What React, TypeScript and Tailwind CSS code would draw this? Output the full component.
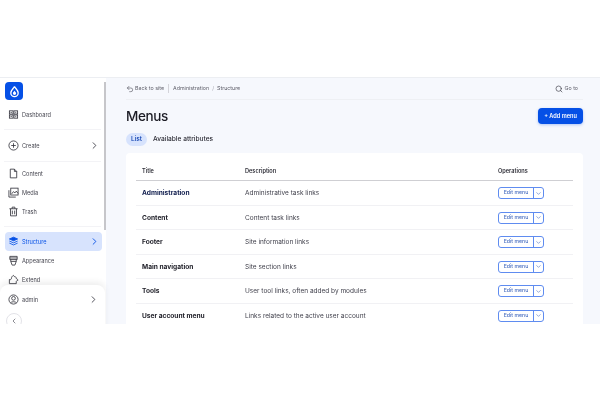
import React from 'react'
import { ChevronRight, ChevronDown, ChevronLeft, Search, Undo2 } from 'lucide-react'

const font = { fontFamily: 'Inter, sans-serif' }

const DropLogo = () => (
  <svg viewBox="0 0 24 24" className="w-[13px] h-[13px]" fill="none" stroke="white">
    <path d="M12 2.5c.8 3.2 6.8 6.6 6.8 12.2a6.8 6.8 0 0 1-13.6 0C5.200 9.100 11.200 5.700 12 2.500z" strokeWidth="2.4" />
    <path d="M12 10.500c.5 1.500 3 2.700 3 4.900a3 3 0 0 1-6 0c0-2.200 2.500-3.400 3-4.900z" fill="white" stroke="none" />
  </svg>
)

const icons: Record<string, React.ReactNode> = {
  dashboard: (
    <>
      <rect x="3" y="4" width="8" height="7" />
      <rect x="13" y="4" width="8" height="7" />
      <rect x="3" y="13" width="8" height="7" />
      <rect x="13" y="13" width="8" height="7" />
      <path d="M5.500 7.500h3M17 6v3M5.500 16.500h3M17 15v3" />
    </>
  ),
  create: (
    <>
      <circle cx="12" cy="12" r="10" />
      <path d="M7 12h10M12 7v10" />
    </>
  ),
  content: <path d="M5 2.500h9l5 5v14H5zM14 2.500v5h5" />,
  media: (
    <>
      <rect x="6" y="2.500" width="16" height="15" />
      <path d="M2 7v15h15M8 15l4-5 3 3 3-4 4 5" />
    </>
  ),
  trash: <path d="M3 6h18M9 6V2.500h6V6M5.500 6v15.500h13V6M9.500 10v8M14.500 10v8" />,
  structure: (
    <>
      <path d="M12 2.500 21 6.500l-9 4-9-4z" fill="currentColor" />
      <path d="m3 11 9 4 9-4M3 15.500l9 4 9-4" />
    </>
  ),
  appearance: <path d="M4 3h16v7H4zM6 10v4h12v-4M6 14l3 8h6l3-8M4 6.500h16" />,
  extend: <path d="M3 21V12c2 1 4.500 0 4.500-2.500C7.500 7 9.500 4 12 3c0 2 2 3 4 3 1 0 2 2 2 4 2 0 3.500 2 3.500 4-1.500 0-3.500 1-3.500 3v4z" />,
  admin: (
    <>
      <circle cx="12" cy="12" r="10" />
      <circle cx="12" cy="9.500" r="4" />
      <path d="M5.500 19.500c1.500-3.500 11.500-3.500 13 0" />
    </>
  ),
}

const NavIcon = ({ name }: { name: string }) => (
  <svg viewBox="0 0 24 24" className="w-[11px] h-[11px] shrink-0" fill="none" stroke="currentColor" strokeWidth="1.8">
    {icons[name]}
  </svg>
)

const NavItem = ({ icon, label, chevron, active }: { icon: string; label: string; chevron?: boolean; active?: boolean }) => (
  <div className={`h-[19px] ml-[5px] mr-[4px] pl-[2px] pr-[2px] flex items-center gap-[3px] rounded-[4px] text-[5.6px] ${active ? 'bg-[#d7e3fd] text-[#0550e6]' : 'text-[#45454f]'}`}>
    <span className={`w-[12px] flex justify-center ${active ? 'text-[#0550e6]' : 'text-[#33333c]'}`}>
      <NavIcon name={icon} />
    </span>
    <span className="flex-1 pt-[1px]">{label}</span>
    {chevron && <ChevronRight className="w-[11px] h-[11px]" strokeWidth={2} />}
  </div>
)

const Divider = ({ className }: { className: string }) => (
  <div className={`ml-[4px] mr-[5px] border-t border-[#f3f3f6] ${className}`} />
)

const rows = [
  ['Administration', 'Administrative task links', 'text-[#0f1c4d]'],
  ['Content', 'Content task links', 'text-[#22222b]'],
  ['Footer', 'Site information links', 'text-[#22222b]'],
  ['Main navigation', 'Site section links', 'text-[#22222b]'],
  ['Tools', 'User tool links, often added by modules', 'text-[#22222b]'],
  ['User account menu', 'Links related to the active user account', 'text-[#22222b]'],
]

const App = () => {
  return (
    <div className="w-[600px] h-[400px] bg-white overflow-hidden blur-[0.25px]" style={font}>
      <div className="h-[77px]" />
      <div className="h-[247px] flex border-t border-[#eceef2] overflow-hidden">
        {/* Sidebar */}
        <aside className="w-[106px] shrink-0 bg-white flex flex-col relative">
          <div className="absolute right-0 top-[4px] w-[2px] h-[148px] bg-[#c6c6ca]" />
          <div className="pt-[4px] pl-[5px]">
            <div className="w-[18px] h-[18px] rounded-[4px] bg-[#0550e6] flex items-center justify-center">
              <DropLogo />
            </div>
          </div>
          <div className="mt-[5px]"><NavItem icon="dashboard" label="Dashboard" /></div>
          <Divider className="mt-[5px]" />
          <div className="mt-[6px]"><NavItem icon="create" label="Create" chevron /></div>
          <Divider className="mt-[6px]" />
          <div className="mt-[2px]"><NavItem icon="content" label="Content" /></div>
          <NavItem icon="media" label="Media" />
          <NavItem icon="trash" label="Trash" />
          <Divider className="mt-[5px]" />
          <div className="mt-[5px]"><NavItem icon="structure" label="Structure" chevron active /></div>
          <NavItem icon="appearance" label="Appearance" />
          <NavItem icon="extend" label="Extend" />
          {/* footer sits over the scrolled nav */}
          <div className="absolute left-0 right-[1px] top-[207px] h-[60px] bg-white shadow-[0_-3px_6px_rgba(0,0,0,0.07)] rounded-t-[8px]">
            <div className="mt-[5px]"><NavItem icon="admin" label="admin" chevron /></div>
            <div className="ml-[6px] mt-[4px] w-[16px] h-[16px] rounded-full border border-[#e3e3e8] flex items-center justify-center text-[#55555f]">
              <ChevronLeft className="w-[8px] h-[8px]" />
            </div>
          </div>
        </aside>

        {/* Main */}
        <main className="flex-1 min-w-0 bg-[#f6f8fd] pl-[20px] pr-[17px]">
          <div className="h-[22px] flex items-center border-b border-[#eef0f4] text-[5.3px] text-[#5f5f6a]">
            <Undo2 className="w-[8px] h-[8px] mr-[1px]" />
            <span className="pt-[1px]">Back to site</span>
            <span className="mx-[4px] h-[9px] border-l border-[#d4d4da]" />
            <span className="pt-[1px]">Administration</span>
            <span className="pt-[1px] mx-[3px] text-[#a5a5ad]">/</span>
            <span className="pt-[1px]">Structure</span>
            <span className="ml-auto mr-[5px] flex items-center gap-[2px]">
              <Search className="w-[8px] h-[8px] text-[#3f3f4a]" />
              <span className="pt-[1px]">Go to</span>
            </span>
          </div>

          <div className="mt-[8px] h-[16px] flex items-center justify-between">
            <h1 className="text-[13.5px] font-medium tracking-[-0.4px] text-[#1b1b24]">Menus</h1>
            <div className="w-[45px] h-[16px] rounded-[4px] bg-[#0550e6] text-white text-[5.6px] font-semibold flex items-center justify-center shadow-[0_1px_3px_rgba(5,80,230,0.3)]">
              + Add menu
            </div>
          </div>

          <div className="mt-[9px] h-[13px] flex items-center gap-[6px] text-[6.6px] font-medium">
            <span className="h-[13px] w-[21px] pt-[1px] rounded-full bg-[#d7e3fd] text-[#0c3fb0] flex items-center justify-center">List</span>
            <span className="pt-[1px] text-[#2d2d36]">Available attributes</span>
          </div>

          <div className="mt-[7px] h-[300px] bg-white rounded-[4px] px-[10px]">
            <div className="h-[28px] pt-[9px] grid grid-cols-[103px_253px_1fr] pl-[6px] items-center border-b border-[#cfcfd3] text-[5.6px] font-semibold text-[#2d2d36]">
              <span>Title</span>
              <span>Description</span>
              <span>Operations</span>
            </div>
            {rows.map(([title, desc, color]) => (
              <div key={title} className="h-[24.5px] pt-[1px] grid grid-cols-[103px_253px_1fr] pl-[6px] items-center border-b border-[#f1f1f4]">
                <span className={`pt-[2px] text-[6.6px] font-bold ${color}`}>{title}</span>
                <span className="pt-[2px] text-[6.5px] text-[#3f3f4a]">{desc}</span>
                <div className="flex h-[12px] w-[46px] border border-[#5f8cf0] rounded-[3px] text-[5.2px] font-medium text-[#4a6fc0]">
                  <span className="w-[35px] flex items-center justify-center border-r border-[#5f8cf0]">Edit menu</span>
                  <span className="flex-1 flex items-center justify-center">
                    <ChevronDown className="w-[7px] h-[7px]" strokeWidth={2} />
                  </span>
                </div>
              </div>
            ))}
          </div>
        </main>
      </div>
    </div>
  )
}

export default App
